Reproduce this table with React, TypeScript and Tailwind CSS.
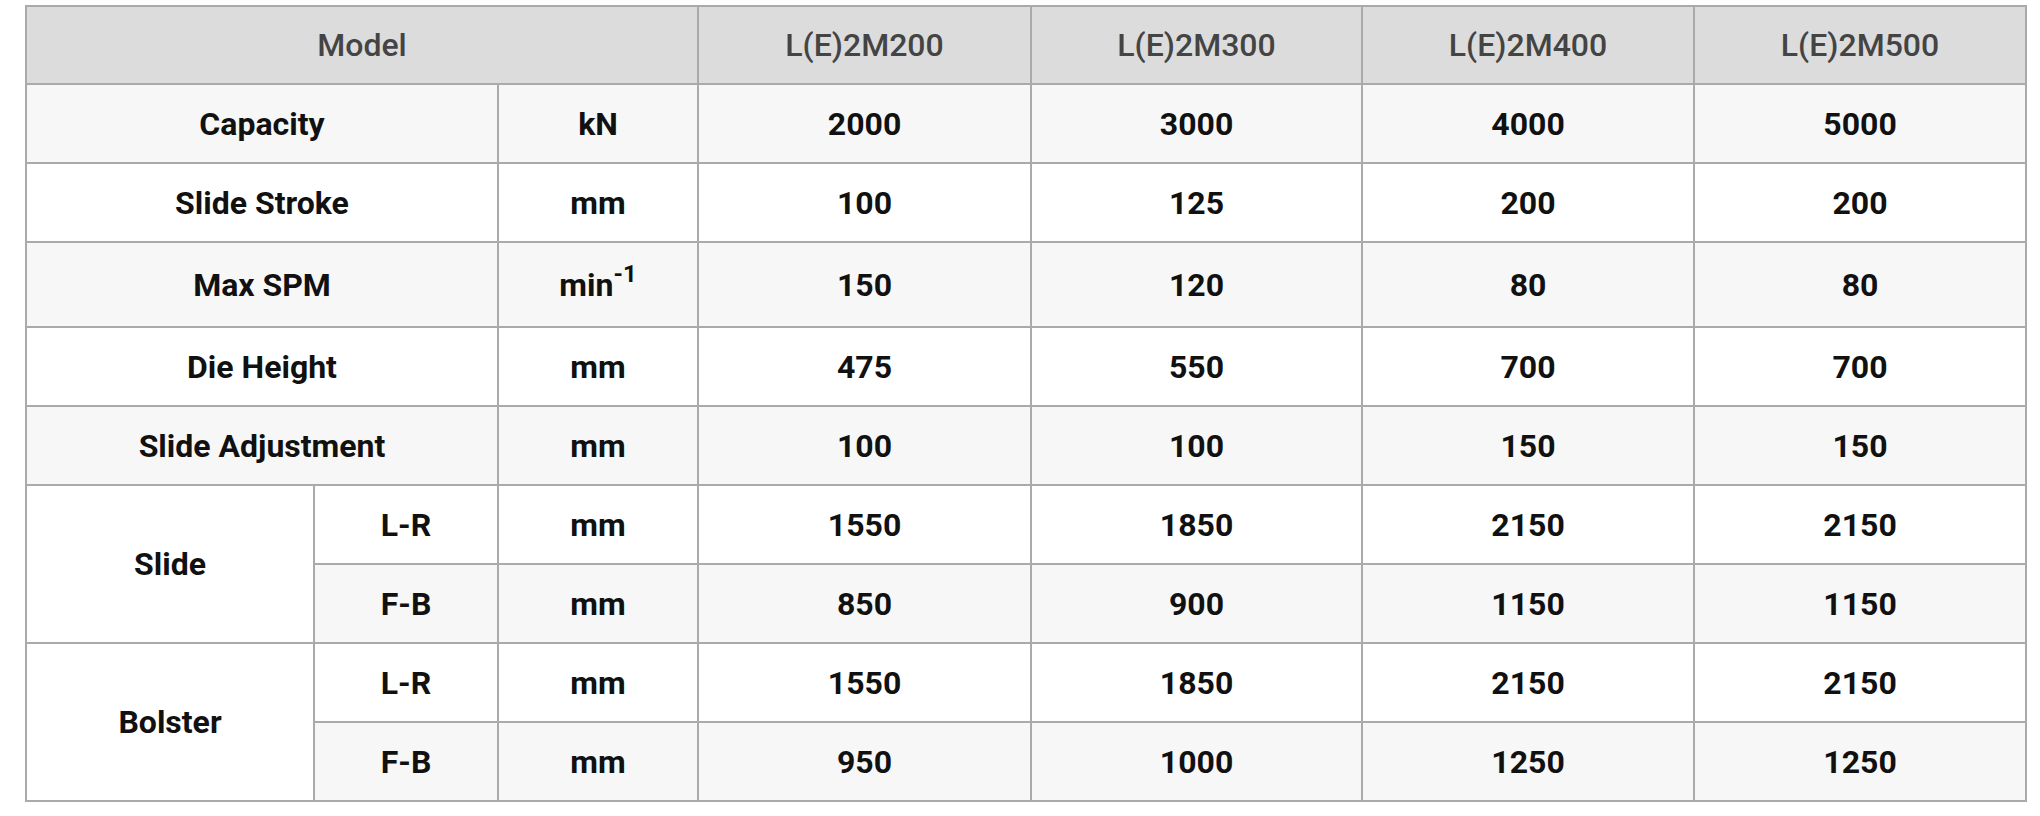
const models = ["L(E)2M200", "L(E)2M300", "L(E)2M400", "L(E)2M500"];

type Row = {
  group?: { label: string; span: number };
  label: string;
  wide?: boolean;
  unit: React.ReactNode;
  values: string[];
  tall?: boolean;
};

const rows: Row[] = [
  { label: "Capacity", wide: true, unit: "kN", values: ["2000", "3000", "4000", "5000"] },
  { label: "Slide Stroke", wide: true, unit: "mm", values: ["100", "125", "200", "200"] },
  {
    label: "Max SPM",
    wide: true,
    unit: (
      <>
        min<sup className="text-[0.75em] align-baseline relative -top-[0.55em]">-1</sup>
      </>
    ),
    values: ["150", "120", "80", "80"],
    tall: true,
  },
  { label: "Die Height", wide: true, unit: "mm", values: ["475", "550", "700", "700"] },
  { label: "Slide Adjustment", wide: true, unit: "mm", values: ["100", "100", "150", "150"] },
  { group: { label: "Slide", span: 2 }, label: "L-R", unit: "mm", values: ["1550", "1850", "2150", "2150"] },
  { label: "F-B", unit: "mm", values: ["850", "900", "1150", "1150"] },
  { group: { label: "Bolster", span: 2 }, label: "L-R", unit: "mm", values: ["1550", "1850", "2150", "2150"] },
  { label: "F-B", unit: "mm", values: ["950", "1000", "1250", "1250"] },
];

export default function App() {
  return (
    <div className="bg-white w-[2040px] h-[816px] pt-[5px] pl-[25px]" style={{ fontFamily: "Roboto, 'Liberation Sans', sans-serif" }}>
      <table className="table-fixed w-[2000px] border-collapse border-2 border-[#aaaaaa] text-center">
        <colgroup>
          <col className="w-[288px]" />
          <col className="w-[184px]" />
          <col className="w-[200px]" />
          <col className="w-[333px]" />
          <col className="w-[331px]" />
          <col className="w-[332px]" />
          <col className="w-[332px]" />
        </colgroup>
        <thead>
          <tr className="h-[78px] bg-[#dcdcdc]">
            <th colSpan={3} className="border-2 border-[#aaaaaa] text-[32px] font-medium text-[#444444]">
              Model
            </th>
            {models.map((m) => (
              <th key={m} className="border-2 border-[#aaaaaa] text-[32px] font-medium text-[#444444]">
                {m}
              </th>
            ))}
          </tr>
        </thead>
        <tbody>
          {rows.map((r, i) => (
            <tr
              key={i}
              className={`${r.tall ? "h-[85px]" : "h-[79px]"} ${i % 2 === 0 ? "bg-[#f7f7f7]" : "bg-white"} text-[32px] font-bold text-[#111111]`}
            >
              {r.group && (
                <td rowSpan={r.group.span} className="border-2 border-[#aaaaaa] bg-white">
                  {r.group.label}
                </td>
              )}
              <td colSpan={r.wide ? 2 : 1} className="border-2 border-[#aaaaaa]">
                {r.label}
              </td>
              <td className="border-2 border-[#aaaaaa]">{r.unit}</td>
              {r.values.map((v, j) => (
                <td key={j} className="border-2 border-[#aaaaaa]">
                  {v}
                </td>
              ))}
            </tr>
          ))}
        </tbody>
      </table>
    </div>
  );
}
